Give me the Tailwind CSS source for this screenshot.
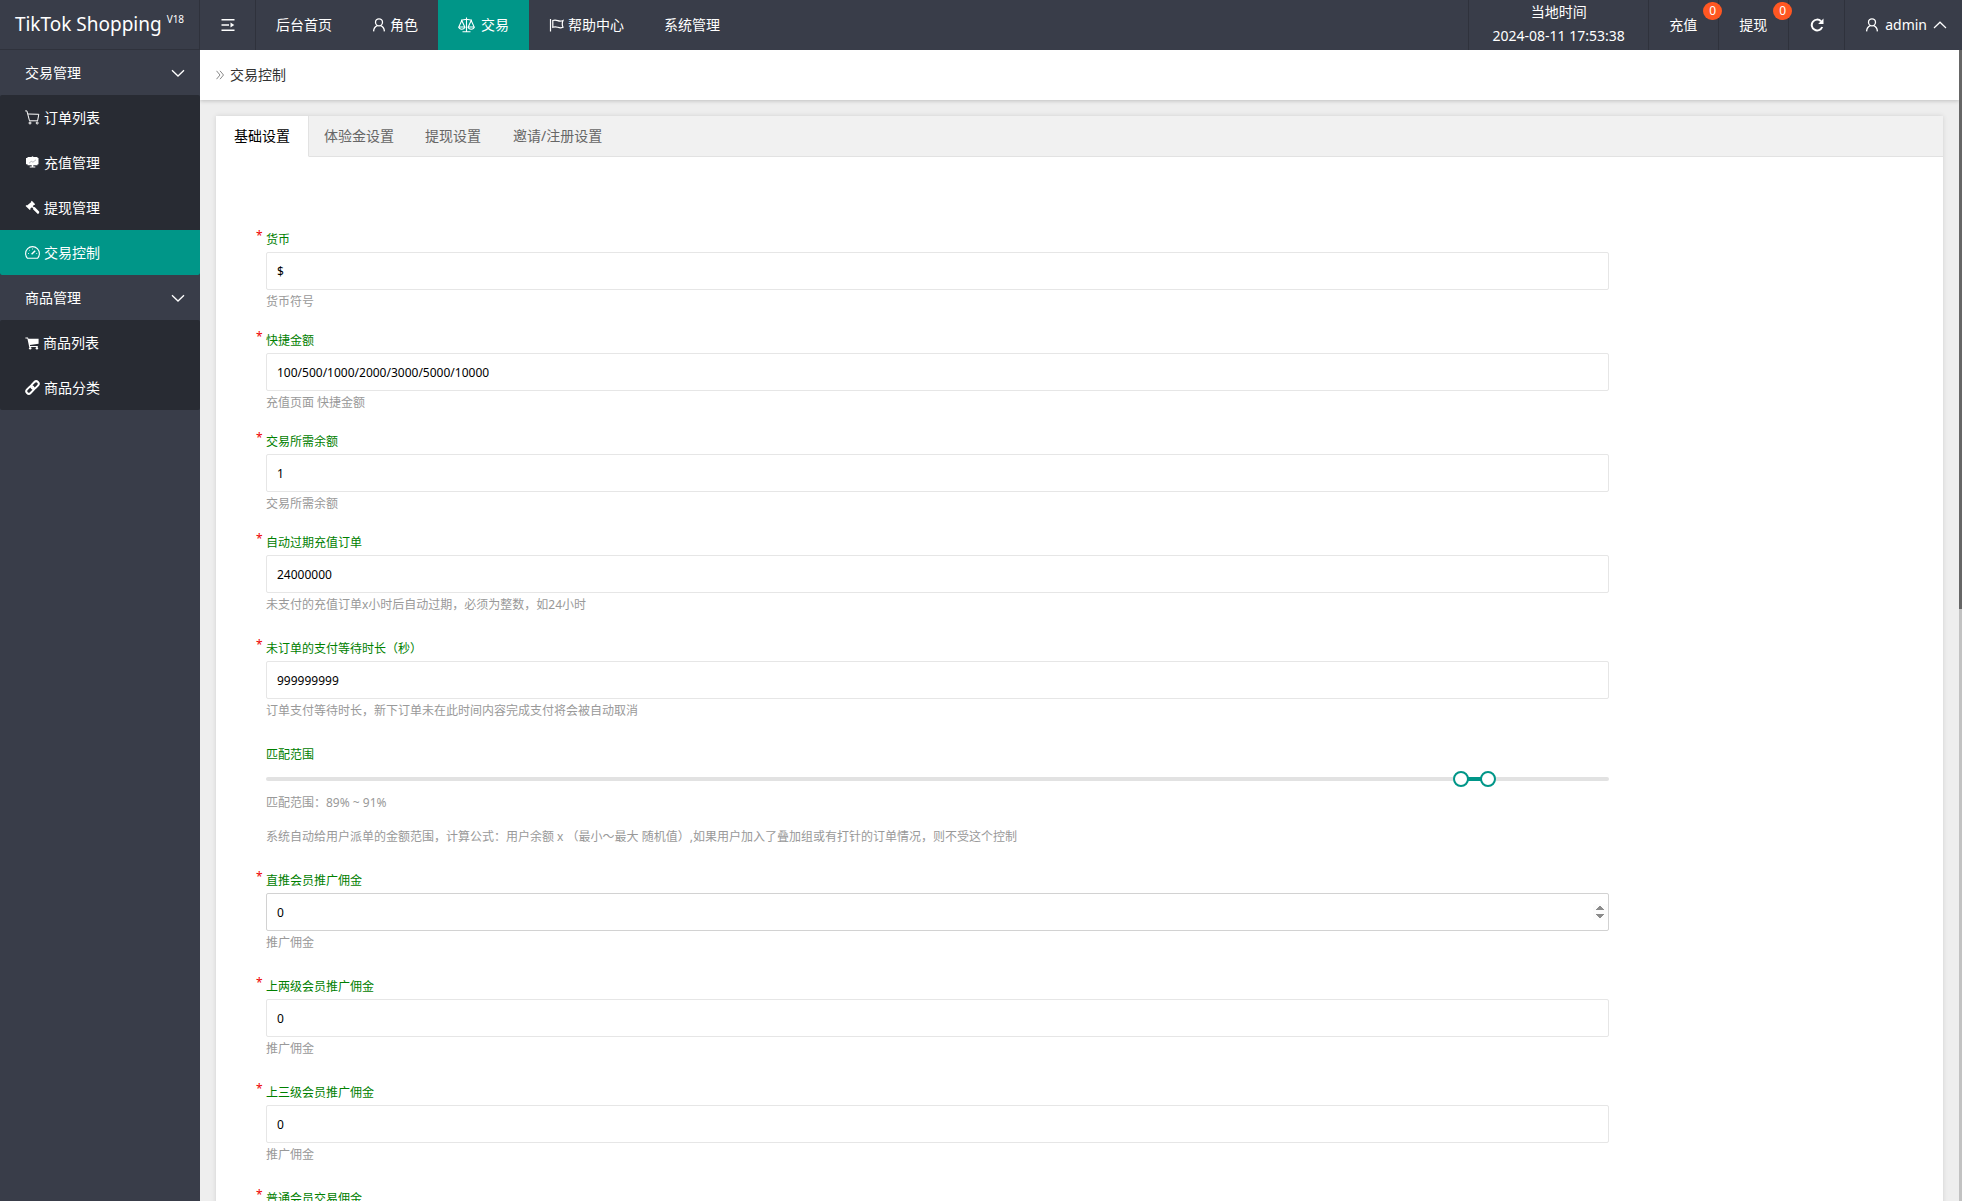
<!DOCTYPE html>
<html lang="zh-CN">
<head>
    <meta charset="UTF-8">
    <meta name="viewport" content="width=device-width, initial-scale=1.0">
    <title>交易控制 - TikTok Shopping</title>
    <script src="https://cdn.jsdelivr.net/npm/@tailwindcss/browser@4"></script>
</head>
<body class="h-screen overflow-hidden flex flex-col bg-[#eee] text-sm text-[#333] font-['Noto_Sans','Noto_Sans_CJK_SC',sans-serif]">

    <!-- Header -->
    <header class="h-[50px] shrink-0 flex bg-[#393d49] text-white">
        <a href="#" class="w-[200px] h-full flex items-center justify-center border-r border-b border-[#2f323c] text-[19px] whitespace-nowrap">
            <span>TikTok Shopping <sup class="text-[10px] -top-2">V18</sup></span>
        </a>
        <button type="button" aria-label="菜单" class="w-14 flex items-center justify-center border-r border-[#2f323c]">
            <svg class="w-3.5 h-3.5" viewBox="0 0 14 14" fill="none" stroke="currentColor" stroke-width="1.5"><path d="M0.5 1.8h13M0.5 7h7.5M0.5 12.2h13"/><path d="M9.5 4.5L13.3 7L9.5 9.5z" fill="currentColor" stroke="none"/></svg>
        </button>
        <nav class="flex">
            <a href="#" class="flex items-center px-5">后台首页</a>
            <a href="#" class="flex items-center gap-1 px-5">
                <svg class="w-3.5 h-3.5" viewBox="0 0 14 14" fill="none" stroke="currentColor" stroke-width="1.3"><circle cx="7" cy="4.3" r="3.5"/><path d="M1.6 13.4c.2-3 1.6-5 3.7-5.8M12.4 13.4c-.2-3-1.6-5-3.7-5.8"/></svg>
                角色
            </a>
            <a href="#" class="flex items-center gap-1.5 px-5 bg-[#009688]">
                <svg class="w-[17px] h-4" viewBox="0 0 17 16" fill="none" stroke="currentColor" stroke-width="1.1"><path d="M8.5 .5v14M4.5 14.8h8M3 3.2c2 0 3.500-.9 5.500-.9s3.500.9 5.500.9M3.800 3.500L.8 10h6zM13.200 3.500L10.200 10h6z"/><path d="M.8 10c.3 1.600 1.400 2.200 3 2.200s2.700-.6 3-2.200M10.200 10c.3 1.600 1.400 2.200 3 2.200s2.700-.6 3-2.200"/></svg>
                交易
            </a>
            <a href="#" class="flex items-center gap-1 px-5">
                <svg class="w-[15px] h-3.5" viewBox="0 0 15 14" fill="none" stroke="currentColor" stroke-width="1.2"><path d="M1.500 1v12.500M3.800 2.500c2-.9 3.400-.5 5 .1s3 .8 5.200-.1c-1 2.300-1 4.500 0 6.800-2 .8-3.600.6-5.200 0s-3-.9-5 0z"/></svg>
                帮助中心
            </a>
            <a href="#" class="flex items-center px-5">系统管理</a>
        </nav>
        <div class="ml-auto flex">
            <div class="w-[181px] flex flex-col items-center border-x border-[#2f323c] leading-6">
                <span>当地时间</span>
                <span>2024-08-11 17:53:38</span>
            </div>
            <a href="#" class="relative flex items-center w-[70px] pl-5 border-r border-[#2f323c]">
                充值
                <span class="absolute top-0.5 -right-1 z-10 w-[19px] h-[18px] rounded-full bg-[#ff5722] text-xs leading-[18px] text-center">0</span>
            </a>
            <a href="#" class="relative flex items-center w-[70px] pl-5 border-r border-[#2f323c]">
                提现
                <span class="absolute top-0.5 -right-1 z-10 w-[19px] h-[18px] rounded-full bg-[#ff5722] text-xs leading-[18px] text-center">0</span>
            </a>
            <button type="button" aria-label="刷新" class="w-14 flex items-center justify-center border-r border-[#2f323c]">
                <svg class="w-3.5 h-3.5" viewBox="0 0 14 14" fill="none" stroke="currentColor" stroke-width="2"><path d="M12.200 9A5.400 5.400 0 1 1 11 3.200"/><path d="M13.500.5v5.400H8.100z" fill="currentColor" stroke="none"/></svg>
            </button>
            <button type="button" class="flex items-center gap-1.5 pl-5 pr-[15px]">
                <svg class="w-3.5 h-3.5" viewBox="0 0 14 14" fill="none" stroke="currentColor" stroke-width="1.3"><circle cx="7" cy="4.300" r="3.500"/><path d="M1.600 13.400c.2-3 1.600-5 3.700-5.800M12.400 13.400c-.2-3-1.600-5-3.700-5.800"/></svg>
                admin
                <svg class="w-3.5 h-3.5" viewBox="0 0 14 14" fill="none" stroke="currentColor" stroke-width="1.200"><path d="M1 10L7 4.200L13 10"/></svg>
            </button>
        </div>
    </header>

    <div class="flex-1 min-h-0 flex">
        <!-- Sidebar -->
        <aside class="w-[200px] shrink-0 bg-[#393d49] text-white">
            <button type="button" class="w-full h-[45px] flex items-center justify-between pl-[25px] pr-[15px]">
                交易管理
                <svg class="w-3.5 h-3.5" viewBox="0 0 14 14" fill="none" stroke="currentColor" stroke-width="1.300"><path d="M1 4.200L7 10L13 4.200"/></svg>
            </button>
            <nav class="rounded-xs overflow-hidden bg-[#282b33]">
                <a href="#" class="h-[45px] flex items-center gap-1 pl-[25px]">
                    <svg class="w-[15px] h-[15px]" viewBox="0 0 15 15" fill="none" stroke="currentColor" stroke-width="1"><path d="M.2 .9h1.700L4.500 10.800h8.300M3 4l10.800.3L12.600 10.800"/><circle cx="5" cy="13" r="1"/><circle cx="12.200" cy="13" r="1"/></svg>
                    订单列表
                </a>
                <a href="#" class="h-[45px] flex items-center gap-1 pl-[25px]">
                    <svg class="w-[15px] h-[15px]" viewBox="0 0 15 15" fill="currentColor"><path d="M2.500 2h3.800l1.200-.8L8.700 2h3.800v1h1v6.300h-1v1H8.300v1.200h2v1H4.700v-1h2v-1.200H2.500v-1h-1.500V3h1.500z"/><path d="M4 8.300L6.200 6.300L8 7.200L11 4.800" stroke="#9a9ca2" stroke-width=".7" fill="none"/></svg>
                    充值管理
                </a>
                <a href="#" class="h-[45px] flex items-center gap-1 pl-[25px]">
                    <svg class="w-[15px] h-[15px]" viewBox="0 0 15 15" fill="currentColor"><path d="M6.800.8L10.200 4.200L9.500 5L9 4.700L7.800 6.300L9 7.300L9.700 6.900L14.300 11.700Q14.500 13.500 12.800 14L8 9.300L8.200 8.400L7 7.300L5.300 8.600L5.600 9.200L4.800 10L.6 5.900L1.400 5.100L2 5.400L6.300 2.100L6 1.600z"/></svg>
                    提现管理
                </a>
                <a href="#" class="h-[45px] flex items-center gap-1 pl-[25px] bg-[#009688]">
                    <svg class="w-[15px] h-[15px]" viewBox="0 0 15 15" fill="none" stroke="currentColor" stroke-width="1.100"><path d="M2.500 13.300A6.900 6.900 0 1 1 12.500 13.300z"/><path d="M6.600 9.200L10.200 5.800" stroke-width="1.500"/><path d="M7.500 3.500v1M3 8.500h1M11.200 8.500h1M4.200 5l.7.7" stroke-width=".8"/></svg>
                    交易控制
                </a>
            </nav>
            <button type="button" class="w-full h-[45px] flex items-center justify-between pl-[25px] pr-[15px]">
                商品管理
                <svg class="w-3.5 h-3.5" viewBox="0 0 14 14" fill="none" stroke="currentColor" stroke-width="1.300"><path d="M1 4.200L7 10L13 4.200"/></svg>
            </button>
            <nav class="rounded-xs overflow-hidden bg-[#282b33]">
                <a href="#" class="h-[45px] flex items-center gap-1 pl-[25px]">
                    <svg class="w-3.5 h-3.5" viewBox="0 0 14 14" fill="currentColor"><path d="M.4 1.500h2.600l.4 1.300h10.200v5L4.900 9l.2 1h7.700v1H4.200L2.400 2.600H.4z"/><circle cx="5.200" cy="12.200" r="1.200"/><circle cx="11.900" cy="12.200" r="1.200"/></svg>
                    商品列表
                </a>
                <a href="#" class="h-[45px] flex items-center gap-1 pl-[25px]">
                    <svg class="w-[15px] h-[15px]" viewBox="0 0 15 15" fill="none" stroke="currentColor" stroke-width="2"><rect x="5.600" y="2.600" width="8.600" height="5" rx="2.500" transform="rotate(-45 9.900 5.100)"/><rect x=".8" y="7.400" width="8.600" height="5" rx="2.500" transform="rotate(-45 5.100 9.900)"/></svg>
                    商品分类
                </a>
            </nav>
        </aside>

        <!-- Main Panel -->
        <main class="flex-1 min-w-0 overflow-hidden">
            <div class="h-[50px] flex items-center gap-1.5 px-4 bg-white shadow-[0_1px_4px_rgba(0,0,0,0.2)]">
                <svg class="w-2 h-2.5" viewBox="0 0 8 10" fill="none" stroke="#888" stroke-width="1"><path d="M.5 .8L4 5L.5 9.200M4 .8L7.500 5L4 9.200"/></svg>
                <h1>交易控制</h1>
            </div>

            <div class="m-4 bg-white shadow-[0_0_5px_rgba(0,0,0,0.12)]">
                <div role="tablist" class="h-[41px] flex bg-[#f1f1f1] text-[#666]">
                    <button type="button" role="tab" aria-selected="true" class="px-[18px] bg-white text-black border-r border-b border-r-[#e2e2e2] border-b-white">基础设置</button>
                    <div class="flex-1 flex border-b border-[#e2e2e2]">
                        <button type="button" role="tab" class="px-[15px]">体验金设置</button>
                        <button type="button" role="tab" class="px-4">提现设置</button>
                        <button type="button" role="tab" class="px-4">邀请/注册设置</button>
                    </div>
                </div>

                <form class="px-6 pt-[71px] text-xs leading-6">
                    <div class="w-4/5 ml-[26px]">
                        <div class="relative mb-[15px]">
                            <span class="absolute -left-2.5 -top-1 text-[#e00]">*</span>
                            <label for="currency" class="block text-[#008000]">货币</label>
                            <input id="currency" type="text" value="$" class="block w-full h-[38px] pl-2.5 bg-white text-black border border-[#e6e6e6] rounded-xs">
                            <p class="text-[#999]">货币符号</p>
                        </div>
                        <div class="relative mb-[15px]">
                            <span class="absolute -left-2.5 -top-1 text-[#e00]">*</span>
                            <label for="quick" class="block text-[#008000]">快捷金额</label>
                            <input id="quick" type="text" value="100/500/1000/2000/3000/5000/10000" class="block w-full h-[38px] pl-2.5 bg-white text-black border border-[#e6e6e6] rounded-xs">
                            <p class="text-[#999]">充值页面 快捷金额</p>
                        </div>
                        <div class="relative mb-[15px]">
                            <span class="absolute -left-2.5 -top-1 text-[#e00]">*</span>
                            <label for="balance" class="block text-[#008000]">交易所需余额</label>
                            <input id="balance" type="text" value="1" class="block w-full h-[38px] pl-2.5 bg-white text-black border border-[#e6e6e6] rounded-xs">
                            <p class="text-[#999]">交易所需余额</p>
                        </div>
                        <div class="relative mb-5">
                            <span class="absolute -left-2.5 -top-1 text-[#e00]">*</span>
                            <label for="expire" class="block text-[#008000]">自动过期充值订单</label>
                            <input id="expire" type="text" value="24000000" class="block w-full h-[38px] pl-2.5 bg-white text-black border border-[#e6e6e6] rounded-xs">
                            <p class="text-[#999]">未支付的充值订单x小时后自动过期，必须为整数，如24小时</p>
                        </div>
                        <div class="relative mb-5">
                            <span class="absolute -left-2.5 -top-1 text-[#e00]">*</span>
                            <label for="wait" class="block text-[#008000]">未订单的支付等待时长（秒）</label>
                            <input id="wait" type="text" value="999999999" class="block w-full h-[38px] pl-2.5 bg-white text-black border border-[#e6e6e6] rounded-xs">
                            <p class="text-[#999]">订单支付等待时长，新下订单未在此时间内容完成支付将会被自动取消</p>
                        </div>

                        <!-- Range slider -->
                        <div class="mb-5">
                            <label for="rangeMin" class="block text-[#008000]">匹配范围</label>
                            <div class="relative h-6 flex items-center">
                                <div class="w-full h-1 rounded-full bg-[#e2e2e2]">
                                    <div class="h-1 bg-[#009688]" style="margin-left: 89%; width: 2%"></div>
                                </div>
                                <input id="rangeMin" type="range" min="0" max="100" value="89" class="absolute -left-2 top-0 w-[calc(100%+16px)] h-6 appearance-none bg-transparent pointer-events-none [&::-webkit-slider-thumb]:appearance-none [&::-webkit-slider-thumb]:pointer-events-auto [&::-webkit-slider-thumb]:size-4 [&::-webkit-slider-thumb]:rounded-full [&::-webkit-slider-thumb]:border-2 [&::-webkit-slider-thumb]:border-solid [&::-webkit-slider-thumb]:border-[#009688] [&::-webkit-slider-thumb]:bg-white">
                                <input id="rangeMax" type="range" min="0" max="100" value="91" aria-label="匹配范围最大值" class="absolute -left-2 top-0 w-[calc(100%+16px)] h-6 appearance-none bg-transparent pointer-events-none [&::-webkit-slider-thumb]:appearance-none [&::-webkit-slider-thumb]:pointer-events-auto [&::-webkit-slider-thumb]:size-4 [&::-webkit-slider-thumb]:rounded-full [&::-webkit-slider-thumb]:border-2 [&::-webkit-slider-thumb]:border-solid [&::-webkit-slider-thumb]:border-[#009688] [&::-webkit-slider-thumb]:bg-white">
                            </div>
                            <p class="text-[#999]">匹配范围：89% ~ 91%</p>
                            <p class="mt-2.5 text-[#999]">系统自动给用户派单的金额范围，计算公式：用户余额 x （最小～最大 随机值）,如果用户加入了叠加组或有打针的订单情况，则不受这个控制</p>
                        </div>

                        <div class="relative mb-5">
                            <span class="absolute -left-2.5 -top-1 text-[#e00]">*</span>
                            <label for="level1" class="block text-[#008000]">直推会员推广佣金</label>
                            <input id="level1" type="number" value="0" class="block w-full h-[38px] pl-2.5 bg-white text-black border border-[#d2d2d2] rounded-xs [&::-webkit-inner-spin-button]:opacity-100">
                            <p class="text-[#999]">推广佣金</p>
                        </div>
                        <div class="relative mb-5">
                            <span class="absolute -left-2.5 -top-1 text-[#e00]">*</span>
                            <label for="level2" class="block text-[#008000]">上两级会员推广佣金</label>
                            <input id="level2" type="number" value="0" class="block w-full h-[38px] pl-2.5 bg-white text-black border border-[#e6e6e6] rounded-xs">
                            <p class="text-[#999]">推广佣金</p>
                        </div>
                        <div class="relative mb-5">
                            <span class="absolute -left-2.5 -top-1 text-[#e00]">*</span>
                            <label for="level3" class="block text-[#008000]">上三级会员推广佣金</label>
                            <input id="level3" type="number" value="0" class="block w-full h-[38px] pl-2.5 bg-white text-black border border-[#e6e6e6] rounded-xs">
                            <p class="text-[#999]">推广佣金</p>
                        </div>
                        <div class="relative mb-5">
                            <span class="absolute -left-2.5 -top-1 text-[#e00]">*</span>
                            <label for="normal" class="block text-[#008000]">普通会员交易佣金</label>
                            <input id="normal" type="number" value="0" class="block w-full h-[38px] pl-2.5 bg-white text-black border border-[#e6e6e6] rounded-xs">
                        </div>
                    </div>
                </form>
            </div>
        </main>

        <!-- Scrollbar -->
        <div class="w-[3px] shrink-0 bg-[#c2c2c2]">
            <div class="bg-[#666]" style="height: 48.6%"></div>
        </div>
    </div>
</body>
</html>
